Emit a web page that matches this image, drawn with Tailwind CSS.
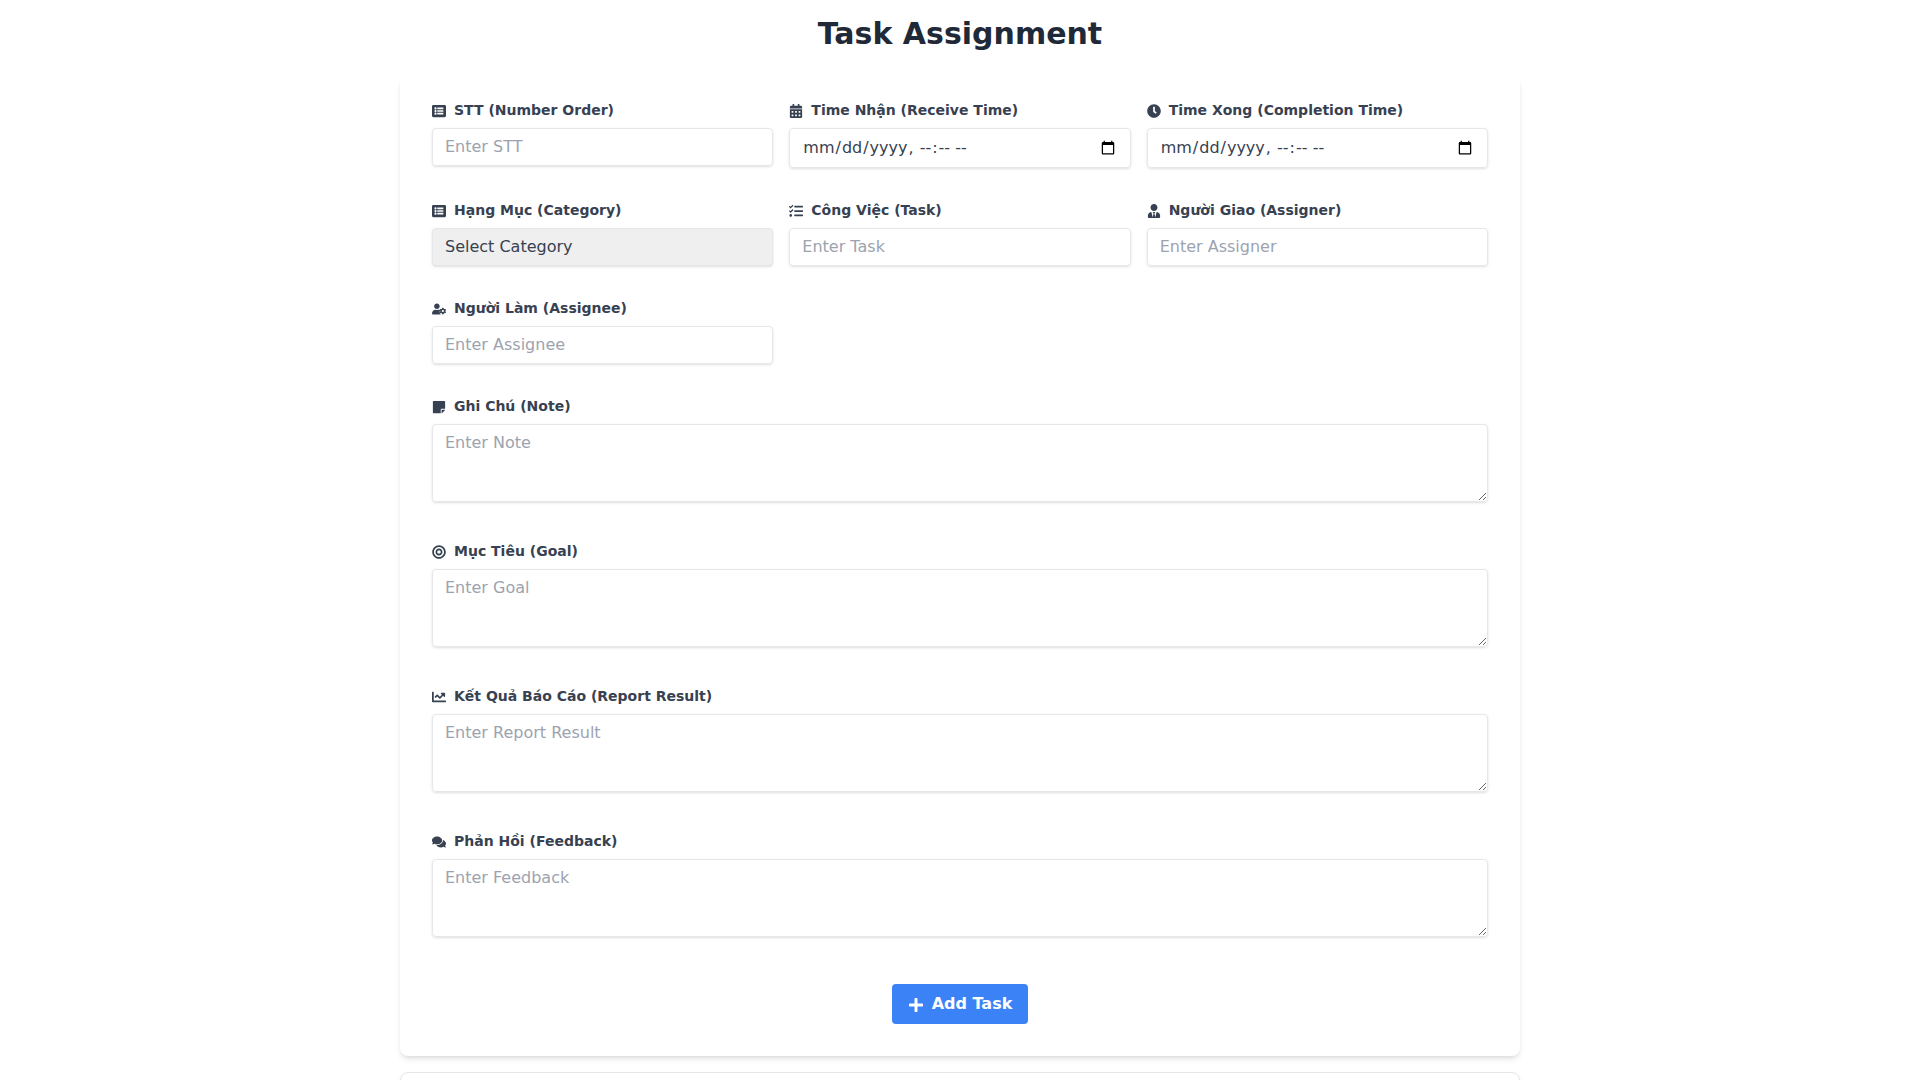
<!DOCTYPE html>
<html lang="vi">
<head>
<meta charset="utf-8">
<title>Task Assignment</title>
<script src="https://cdn.jsdelivr.net/npm/@tailwindcss/browser@4"></script>
</head>
<body class="h-screen overflow-hidden bg-white font-['DejaVu_Sans',sans-serif] text-[#374151]">
<div class="mx-auto max-w-[1120px] pt-4">
  <h1 class="mb-6 text-center text-3xl font-bold text-[#1f2937]">Task Assignment</h1>
  <form class="rounded-lg bg-white px-8 pt-6 pb-8 shadow-md">
    <div class="mb-8 grid grid-cols-3 gap-x-4 gap-y-8">
      <div>
        <label class="mb-2 flex items-center text-sm font-bold"><svg class="mr-2 h-[14px] w-[14px] translate-y-px fill-current" viewBox="0 0 512 512"><path d="M464 480H48c-26.51 0-48-21.49-48-48V80c0-26.51 21.49-48 48-48h416c26.51 0 48 21.49 48 48v352c0 26.51-21.49 48-48 48zM128 120c-22.091 0-40 17.909-40 40s17.909 40 40 40 40-17.909 40-40-17.909-40-40-40zm0 96c-22.091 0-40 17.909-40 40s17.909 40 40 40 40-17.909 40-40-17.909-40-40-40zm0 96c-22.091 0-40 17.909-40 40s17.909 40 40 40 40-17.909 40-40-17.909-40-40-40zm288-136v-32c0-6.627-5.373-12-12-12H204c-6.627 0-12 5.373-12 12v32c0 6.627 5.373 12 12 12h200c6.627 0 12-5.373 12-12zm0 96v-32c0-6.627-5.373-12-12-12H204c-6.627 0-12 5.373-12 12v32c0 6.627 5.373 12 12 12h200c6.627 0 12-5.373 12-12zm0 96v-32c0-6.627-5.373-12-12-12H204c-6.627 0-12 5.373-12 12v32c0 6.627 5.373 12 12 12h200c6.627 0 12-5.373 12-12z"/></svg>STT (Number Order)</label>
        <input type="text" placeholder="Enter STT" class="w-full rounded border border-[#e5e7eb] px-3 py-2 leading-tight text-[#374151] shadow-sm placeholder:text-[#9ca3af]">
      </div>
      <div>
        <label class="mb-2 flex items-center text-sm font-bold"><svg class="mr-2 h-[14px] w-[14px] translate-y-px fill-current" viewBox="0 0 448 512"><path d="M0 464c0 26.5 21.5 48 48 48h352c26.5 0 48-21.5 48-48V192H0v272zm320-196c0-6.6 5.4-12 12-12h40c6.6 0 12 5.4 12 12v40c0 6.6-5.4 12-12 12h-40c-6.6 0-12-5.4-12-12v-40zm0 128c0-6.6 5.4-12 12-12h40c6.6 0 12 5.4 12 12v40c0 6.6-5.4 12-12 12h-40c-6.6 0-12-5.4-12-12v-40zM192 268c0-6.6 5.4-12 12-12h40c6.6 0 12 5.4 12 12v40c0 6.6-5.4 12-12 12h-40c-6.6 0-12-5.4-12-12v-40zm0 128c0-6.6 5.4-12 12-12h40c6.6 0 12 5.4 12 12v40c0 6.6-5.4 12-12 12h-40c-6.6 0-12-5.4-12-12v-40zM64 268c0-6.6 5.4-12 12-12h40c6.6 0 12 5.4 12 12v40c0 6.6-5.4 12-12 12H76c-6.6 0-12-5.4-12-12v-40zm0 128c0-6.6 5.4-12 12-12h40c6.6 0 12 5.4 12 12v40c0 6.6-5.4 12-12 12H76c-6.6 0-12-5.4-12-12v-40zM400 64h-48V16c0-8.8-7.2-16-16-16h-32c-8.8 0-16 7.2-16 16v48H160V16c0-8.8-7.2-16-16-16h-32c-8.8 0-16 7.2-16 16v48H48C21.5 64 0 85.5 0 112v48h448v-48c0-26.5-21.5-48-48-48z"/></svg>Time Nhận (Receive Time)</label>
        <input type="datetime-local" class="h-10 w-full rounded border border-[#e5e7eb] px-3 py-2 leading-tight text-[#374151] shadow-sm">
      </div>
      <div>
        <label class="mb-2 flex items-center text-sm font-bold"><svg class="mr-2 h-[14px] w-[14px] translate-y-px fill-current" viewBox="0 0 512 512"><path d="M256,8C119,8,8,119,8,256S119,504,256,504,504,393,504,256,393,8,256,8Zm92.49,313h0l-20,25a16,16,0,0,1-22.49,2.5h0l-67-49.72a40,40,0,0,1-15-31.23V112a16,16,0,0,1,16-16h32a16,16,0,0,1,16,16V256l58,42.5A16,16,0,0,1,348.49,321Z"/></svg>Time Xong (Completion Time)</label>
        <input type="datetime-local" class="h-10 w-full rounded border border-[#e5e7eb] px-3 py-2 leading-tight text-[#374151] shadow-sm">
      </div>
      <div>
        <label class="mb-2 flex items-center text-sm font-bold"><svg class="mr-2 h-[14px] w-[14px] translate-y-px fill-current" viewBox="0 0 512 512"><path d="M464 480H48c-26.51 0-48-21.49-48-48V80c0-26.51 21.49-48 48-48h416c26.51 0 48 21.49 48 48v352c0 26.51-21.49 48-48 48zM128 120c-22.091 0-40 17.909-40 40s17.909 40 40 40 40-17.909 40-40-17.909-40-40-40zm0 96c-22.091 0-40 17.909-40 40s17.909 40 40 40 40-17.909 40-40-17.909-40-40-40zm0 96c-22.091 0-40 17.909-40 40s17.909 40 40 40 40-17.909 40-40-17.909-40-40-40zm288-136v-32c0-6.627-5.373-12-12-12H204c-6.627 0-12 5.373-12 12v32c0 6.627 5.373 12 12 12h200c6.627 0 12-5.373 12-12zm0 96v-32c0-6.627-5.373-12-12-12H204c-6.627 0-12 5.373-12 12v32c0 6.627 5.373 12 12 12h200c6.627 0 12-5.373 12-12zm0 96v-32c0-6.627-5.373-12-12-12H204c-6.627 0-12 5.373-12 12v32c0 6.627 5.373 12 12 12h200c6.627 0 12-5.373 12-12z"/></svg>Hạng Mục (Category)</label>
        <select class="h-[38px] w-full appearance-none rounded border border-[#e5e7eb] bg-[#efefef] px-3 py-2 leading-tight text-[#374151] shadow-sm"><option>Select Category</option></select>
      </div>
      <div>
        <label class="mb-2 flex items-center text-sm font-bold"><svg class="mr-2 h-[14px] w-[14px] translate-y-px fill-current" viewBox="0 0 512 512"><path d="M139.61 35.5a12 12 0 0 0-17 0L58.93 98.81l-22.7-22.12a12 12 0 0 0-17 0L3.53 92.41a12 12 0 0 0 0 17l47.59 47.4a12.78 12.78 0 0 0 17.61 0l15.59-15.62L156.52 69a12.09 12.09 0 0 0 .09-17zm0 159.19a12 12 0 0 0-17 0l-63.68 63.72-22.7-22.1a12 12 0 0 0-17 0L3.53 252a12 12 0 0 0 0 17L51 316.5a12.77 12.77 0 0 0 17.6 0l15.7-15.69 72.2-72.22a12 12 0 0 0 .09-16.9zM64 368c-26.49 0-48.59 21.5-48.59 48S37.53 464 64 464a48 48 0 0 0 0-96zm432 16H208a16 16 0 0 0-16 16v32a16 16 0 0 0 16 16h288a16 16 0 0 0 16-16v-32a16 16 0 0 0-16-16zm0-320H208a16 16 0 0 0-16 16v32a16 16 0 0 0 16 16h288a16 16 0 0 0 16-16V80a16 16 0 0 0-16-16zm0 160H208a16 16 0 0 0-16 16v32a16 16 0 0 0 16 16h288a16 16 0 0 0 16-16v-32a16 16 0 0 0-16-16z"/></svg>Công Việc (Task)</label>
        <input type="text" placeholder="Enter Task" class="w-full rounded border border-[#e5e7eb] px-3 py-2 leading-tight text-[#374151] shadow-sm placeholder:text-[#9ca3af]">
      </div>
      <div>
        <label class="mb-2 flex items-center text-sm font-bold"><svg class="mr-2 h-[14px] w-[14px] translate-y-px fill-current" viewBox="0 0 448 512"><path d="M224 256c70.7 0 128-57.3 128-128S294.7 0 224 0 96 57.3 96 128s57.3 128 128 128zm95.8 32.6L272 480l-32-136 32-56h-96l32 56-32 136-47.8-191.4C56.9 292 0 350.3 0 422.4V464c0 26.5 21.5 48 48 48h352c26.5 0 48-21.5 48-48v-41.6c0-72.1-56.9-130.4-128.2-133.8z"/></svg>Người Giao (Assigner)</label>
        <input type="text" placeholder="Enter Assigner" class="w-full rounded border border-[#e5e7eb] px-3 py-2 leading-tight text-[#374151] shadow-sm placeholder:text-[#9ca3af]">
      </div>
      <div>
        <label class="mb-2 flex items-center text-sm font-bold"><svg class="mr-2 h-[14px] w-[14px] translate-y-px fill-current" viewBox="0 0 640 512"><path d="M610.5 373.3c2.6-14.1 2.6-28.5 0-42.6l25.8-14.9c3-1.7 4.3-5.2 3.3-8.5-6.7-21.6-18.2-41.2-33.2-57.4-2.3-2.5-6-3.1-9-1.4l-25.8 14.9c-10.9-9.3-23.4-16.5-36.9-21.3v-29.8c0-3.4-2.4-6.4-5.7-7.1-22.3-5-45-4.8-66.2 0-3.3.7-5.7 3.7-5.7 7.1v29.8c-13.5 4.8-26 12-36.9 21.3l-25.8-14.9c-2.9-1.7-6.7-1.1-9 1.4-15 16.2-26.5 35.8-33.2 57.4-1 3.3.4 6.8 3.3 8.5l25.8 14.9c-2.6 14.1-2.6 28.5 0 42.6l-25.8 14.9c-3 1.7-4.3 5.2-3.3 8.5 6.7 21.6 18.2 41.1 33.2 57.4 2.3 2.5 6 3.1 9 1.4l25.8-14.9c10.9 9.3 23.4 16.5 36.9 21.3v29.8c0 3.4 2.4 6.4 5.7 7.1 22.3 5 45 4.8 66.2 0 3.3-.7 5.7-3.7 5.7-7.1v-29.8c13.5-4.8 26-12 36.9-21.3l25.8 14.9c2.9 1.7 6.7 1.1 9-1.4 15-16.2 26.5-35.8 33.2-57.4 1-3.3-.4-6.8-3.3-8.5l-25.8-14.9zM496 400.5c-26.8 0-48.5-21.8-48.5-48.5s21.8-48.5 48.5-48.5 48.5 21.8 48.5 48.5-21.7 48.5-48.5 48.5zM224 256c70.7 0 128-57.3 128-128S294.7 0 224 0 96 57.3 96 128s57.3 128 128 128zM48 512h352c-24-30-62-80-48-140 4-28 10-52 18-68-24-10-50-16-78-16h-16c-22 10-46 16-52 16s-30-6-52-16h-16C76 288 0 364 0 464c0 26 22 48 48 48z"/></svg>Người Làm (Assignee)</label>
        <input type="text" placeholder="Enter Assignee" class="w-full rounded border border-[#e5e7eb] px-3 py-2 leading-tight text-[#374151] shadow-sm placeholder:text-[#9ca3af]">
      </div>
    </div>
    <div class="mb-8">
      <label class="mb-2 flex items-center text-sm font-bold"><svg class="mr-2 h-[14px] w-[14px] translate-y-px fill-current" viewBox="0 0 448 512"><path d="M312 320h136V56c0-13.3-10.7-24-24-24H24C10.7 32 0 42.7 0 56v400c0 13.3 10.7 24 24 24h264V344c0-13.2 10.8-24 24-24zm129 55l-98 98c-4.5 4.5-10.6 7-17 7h-6V352h128v6.1c0 6.3-2.5 12.4-7 16.9z"/></svg>Ghi Chú (Note)</label>
      <textarea placeholder="Enter Note" class="h-[78px] w-full rounded border border-[#e5e7eb] px-3 py-2 leading-tight text-[#374151] shadow-sm placeholder:text-[#9ca3af]"></textarea>
    </div>
    <div class="mb-8">
      <label class="mb-2 flex items-center text-sm font-bold"><svg class="mr-2 h-[14px] w-[14px] translate-y-px fill-current" viewBox="0 0 496 512"><path d="M248 8C111.03 8 0 119.03 0 256s111.03 248 248 248 248-111.03 248-248S384.97 8 248 8zm0 432c-101.69 0-184-82.29-184-184 0-101.69 82.29-184 184-184 101.69 0 184 82.29 184 184 0 101.69-82.29 184-184 184zm0-312c-70.69 0-128 57.31-128 128s57.31 128 128 128 128-57.31 128-128-57.31-128-128-128zm0 192c-35.37 0-64-28.63-64-64s28.63-64 64-64 64 28.63 64 64-28.63 64-64 64z"/></svg>Mục Tiêu (Goal)</label>
      <textarea placeholder="Enter Goal" class="h-[78px] w-full rounded border border-[#e5e7eb] px-3 py-2 leading-tight text-[#374151] shadow-sm placeholder:text-[#9ca3af]"></textarea>
    </div>
    <div class="mb-8">
      <label class="mb-2 flex items-center text-sm font-bold"><svg class="mr-2 h-[14px] w-[14px] translate-y-px fill-current" viewBox="0 0 512 512"><path d="M496 384H64V80c0-8.84-7.16-16-16-16H16C7.16 64 0 71.16 0 80v336c0 17.67 14.33 32 32 32h464c8.84 0 16-7.16 16-16v-32c0-8.84-7.16-16-16-16zM464 96H345.94c-21.38 0-32.09 25.85-16.97 40.97l32.4 32.4L288 242.75l-73.37-73.37c-12.5-12.5-32.76-12.5-45.25 0l-68.69 68.69c-6.25 6.25-6.25 16.38 0 22.63l22.62 22.62c6.25 6.25 16.38 6.25 22.63 0L192 237.25l73.37 73.37c12.5 12.5 32.76 12.5 45.25 0l96-96 32.4 32.4c15.12 15.12 40.97 4.41 40.97-16.97V112c.01-8.84-7.15-16-16-16z"/></svg>Kết Quả Báo Cáo (Report Result)</label>
      <textarea placeholder="Enter Report Result" class="h-[78px] w-full rounded border border-[#e5e7eb] px-3 py-2 leading-tight text-[#374151] shadow-sm placeholder:text-[#9ca3af]"></textarea>
    </div>
    <div class="mb-10">
      <label class="mb-2 flex items-center text-sm font-bold"><svg class="mr-2 h-[14px] w-[14px] translate-y-px fill-current" viewBox="0 0 576 512"><path d="M416 192c0-88.4-93.1-160-208-160S0 103.6 0 192c0 34.3 14.1 65.9 38 92-13.4 30.2-35.5 54.2-35.8 54.5-2.2 2.3-2.8 5.7-1.5 8.7S4.8 352 8 352c36.6 0 66.9-12.3 88.7-25 32.2 15.7 70.3 25 111.3 25 114.9 0 208-71.6 208-160zm122 220c23.9-26 38-57.7 38-92 0-66.9-53.5-124.2-129.3-148.1.9 6.6 1.3 13.3 1.3 20.1 0 105.9-107.7 192-240 192-10.8 0-21.3-.8-31.7-1.9C207.8 439.6 281.8 480 368 480c41 0 79.1-9.2 111.3-25 21.8 12.7 52.1 25 88.7 25 3.2 0 6.1-1.9 7.3-4.8 1.3-2.9.7-6.3-1.5-8.7-.3-.3-22.4-24.2-35.8-54.5z"/></svg>Phản Hồi (Feedback)</label>
      <textarea placeholder="Enter Feedback" class="h-[78px] w-full rounded border border-[#e5e7eb] px-3 py-2 leading-tight text-[#374151] shadow-sm placeholder:text-[#9ca3af]"></textarea>
    </div>
    <div class="flex justify-center">
      <button type="button" class="flex items-center rounded bg-[#3b82f6] px-4 py-2 font-bold text-white"><svg class="mr-2 h-4 w-4 translate-y-px fill-current" viewBox="0 0 448 512"><path d="M416 208H272V64c0-17.67-14.33-32-32-32h-32c-17.67 0-32 14.33-32 32v144H32c-17.67 0-32 14.33-32 32v32c0 17.67 14.33 32 32 32h144v144c0 17.67 14.33 32 32 32h32c17.67 0 32-14.33 32-32V304h144c17.67 0 32-14.33 32-32v-32c0-17.67-14.33-32-32-32z"/></svg>Add Task</button>
    </div>
  </form>
  <div class="mt-4 h-40 rounded-lg border border-[#e5e7eb] bg-white shadow-md"></div>
</div>
</body>
</html>
